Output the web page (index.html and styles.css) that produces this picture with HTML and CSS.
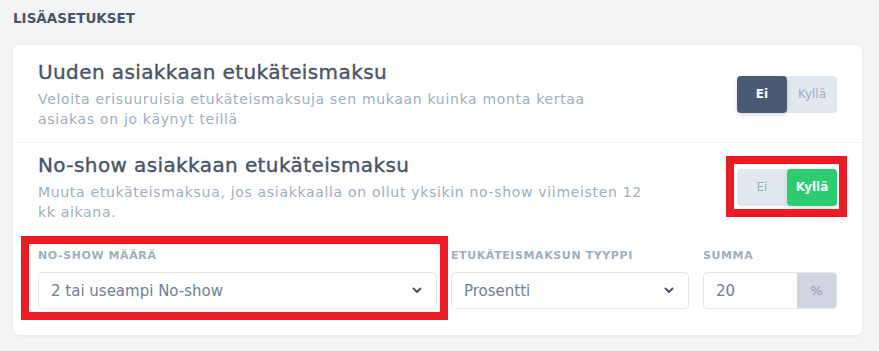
FILE: index.html
```html
<!DOCTYPE html>
<html lang="fi">
<head>
    <meta charset="UTF-8">
    <meta name="viewport" content="width=device-width, initial-scale=1.0">
    <title>Lisäasetukset</title>
    <link rel="stylesheet" href="styles.css">
</head>
<body>

    <div class="page">
        <h2 class="section-title">LISÄASETUKSET</h2>

        <div class="card">
            <div class="setting-row first">
                <div class="setting-text">
                    <h3>Uuden asiakkaan etukäteismaksu</h3>
                    <p>Veloita erisuuruisia etukäteismaksuja sen mukaan kuinka monta kertaa asiakas on jo käynyt teillä</p>
                </div>
                <div class="toggle">
                    <span class="option active-dark">Ei</span>
                    <span class="option">Kyllä</span>
                </div>
            </div>

            <div class="setting-row second">
                <div class="setting-text">
                    <h3>No-show asiakkaan etukäteismaksu</h3>
                    <p>Muuta etukäteismaksua, jos asiakkaalla on ollut yksikin no-show viimeisten 12 kk aikana.</p>
                </div>
                <div class="toggle highlighted">
                    <span class="option">Ei</span>
                    <span class="option active-green">Kyllä</span>
                </div>
            </div>

            <div class="fields">
                <div class="field highlighted">
                    <label>NO-SHOW MÄÄRÄ</label>
                    <div class="select">
                        <span>2 tai useampi No-show</span>
                        <svg width="10" height="7" viewBox="0 0 10 7"><path d="M1.5 1.5 L5 5 L8.5 1.5" fill="none" stroke="#4a5568" stroke-width="2" stroke-linecap="round" stroke-linejoin="round"/></svg>
                    </div>
                </div>

                <div class="field">
                    <label>ETUKÄTEISMAKSUN TYYPPI</label>
                    <div class="select">
                        <span>Prosentti</span>
                        <svg width="10" height="7" viewBox="0 0 10 7"><path d="M1.5 1.5 L5 5 L8.5 1.5" fill="none" stroke="#4a5568" stroke-width="2" stroke-linecap="round" stroke-linejoin="round"/></svg>
                    </div>
                </div>

                <div class="field">
                    <label>SUMMA</label>
                    <div class="input-group">
                        <span class="value">20</span>
                        <span class="addon">%</span>
                    </div>
                </div>
            </div>
        </div>
    </div>

</body>
</html>
```
FILE: styles.css
```css
* {
    margin: 0;
    padding: 0;
    box-sizing: border-box;
}

body {
    font-family: "DejaVu Sans", sans-serif;
    background: #f3f4f6;
    color: #4a5568;
}

.page {
    padding: 10px 17px 16px 13px;
}

.section-title {
    font-size: 13.5px;
    font-weight: bold;
    color: #4a5568;
    line-height: 16px;
    margin-bottom: 19px;
}

.card {
    background: #fff;
    border-radius: 6px;
    box-shadow: 0 1px 3px rgba(0, 0, 0, 0.06);
    padding-bottom: 26px;
}

.setting-row {
    display: flex;
    align-items: center;
    justify-content: space-between;
    padding: 14px 25px 13px;
}

.setting-row.first {
    border-bottom: 1px solid #f1f3f6;
}

.setting-row.second {
    padding-top: 9px;
    padding-bottom: 0;
}

.setting-text {
    width: 605px;
    flex-shrink: 0;
}

.setting-text h3 {
    font-size: 20px;
    font-weight: normal;
    line-height: 26px;
    letter-spacing: 0.4px;
    color: #4a5568;
    -webkit-text-stroke: 0.4px #4a5568;
}

.setting-text p {
    font-size: 14px;
    line-height: 20px;
    letter-spacing: 0.68px;
    color: #a0aec0;
    margin-top: 4px;
}

.toggle {
    display: flex;
    width: 100px;
    height: 37px;
    background: #e2e8f0;
    border-radius: 4px;
}

.option {
    flex: 1;
    display: flex;
    align-items: center;
    justify-content: center;
    font-size: 12px;
    color: #a0aec0;
    border-radius: 4px;
}

.active-dark {
    background: #4a5a73;
    color: #fff;
    font-weight: bold;
    box-shadow: 0 2px 5px rgba(0, 0, 0, 0.15);
}

.active-green {
    background: #2ecc71;
    color: #fff;
    font-weight: bold;
    box-shadow: 0 2px 5px rgba(0, 0, 0, 0.1);
}

/* punaiset korostuslaatikot */
.highlighted {
    position: relative;
}

.toggle.highlighted::after {
    content: "";
    position: absolute;
    top: -13px;
    left: -11px;
    right: -10px;
    bottom: -11px;
    border: 8px solid #ed1c24;
}

.field.highlighted::after {
    content: "";
    position: absolute;
    top: -12px;
    left: -17px;
    right: -11px;
    bottom: -11px;
    border: 8px solid #ed1c24;
}

.fields {
    display: grid;
    grid-template-columns: 399px 238px 134px;
    column-gap: 14px;
    padding: 26px 25px 0;
}

label {
    display: block;
    font-size: 11px;
    font-weight: bold;
    letter-spacing: 0.6px;
    color: #a0aec0;
    line-height: 16px;
    margin-bottom: 8px;
}

.select {
    display: flex;
    align-items: center;
    justify-content: space-between;
    height: 37px;
    border: 1px solid #e2e8f0;
    border-radius: 4px;
    padding: 0 14px 0 12px;
    font-size: 15px;
    color: #718096;
}

.select svg {
    display: block;
}

.input-group {
    display: flex;
    height: 37px;
    border: 1px solid #e2e8f0;
    border-radius: 4px;
    overflow: hidden;
    font-size: 15px;
}

.input-group .value {
    flex: 1;
    display: flex;
    align-items: center;
    padding-left: 12px;
    color: #718096;
}

.input-group .addon {
    width: 39px;
    display: flex;
    align-items: center;
    justify-content: center;
    background: #cfd6df;
    color: #8f9bb0;
    font-size: 13px;
}
```
